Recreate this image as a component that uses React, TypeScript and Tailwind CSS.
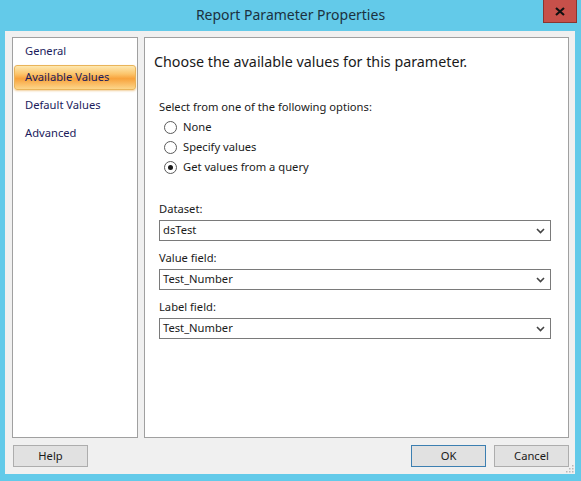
import React from "react";

const font = { fontFamily: '"Noto Sans", "Open Sans", sans-serif' };

function Radio({ checked, label }: { checked?: boolean; label: string }) {
  return (
    <div className="flex items-center h-[20px]">
      <span className="ml-[5px] w-[13px] h-[13px] rounded-full border border-[#5a5a5a] bg-white flex items-center justify-center">
        {checked && <span className="w-[5px] h-[5px] rounded-full bg-[#1a1a1a]" />}
      </span>
      <span className="ml-[6px] text-[11.2px] text-[#1a1a1a]">{label}</span>
    </div>
  );
}

function Select({ label, value }: { label: string; value: string }) {
  return (
    <div className="flex flex-col">
      <div className="text-[11.2px] text-[#1a1a1a] h-[19px] leading-[19px]">{label}</div>
      <div className="mt-[2px] w-[392px] h-[21px] border border-[#7a7a7a] bg-white flex items-center justify-between pl-[3px] pr-[5px]">
        <span className="text-[11.2px] text-[#1a1a1a]">{value}</span>
        <svg width="9" height="6" viewBox="0 0 9 6">
          <path d="M1 1 L4.5 4.5 L8 1" fill="none" stroke="#444" strokeWidth="1.6" />
        </svg>
      </div>
    </div>
  );
}

function Grip() {
  const dots = [
    [6, 0],
    [3, 3],
    [6, 3],
    [0, 6],
    [3, 6],
    [6, 6],
  ];
  return (
    <svg width="8" height="8" viewBox="0 0 8 8" className="absolute right-[1px] bottom-[1px]">
      {dots.map(([x, y], i) => (
        <rect key={i} x={x} y={y} width="1.5" height="1.5" fill="#b8b8b8" />
      ))}
    </svg>
  );
}

export default function App() {
  return (
    <div className="w-[581px] h-[481px] bg-[#63cae9] flex flex-col" style={font}>
      <div className="relative h-[31px] flex items-center justify-center">
        <span className="text-[14px] text-[#1b3140] mt-[-2px]">Report Parameter Properties</span>
        <div className="absolute right-[4px] top-0 w-[34px] h-[23px] bg-[#c7504a] border border-[#8a3530] border-t-0 flex items-center justify-center">
          <svg width="10" height="9" viewBox="0 0 10 9">
            <path d="M1 1 L9 8 M9 1 L1 8" stroke="#111" strokeWidth="2.2" />
          </svg>
        </div>
      </div>
      <div className="relative ml-[5px] w-[570px] h-[443px] bg-[#f0f0f0] pt-[6px] pl-[7px] pr-[6px] pb-[7px] flex flex-col">
        <div className="flex gap-[6px] h-[401px]">
          <div className="w-[126px] h-full bg-white border border-[#a0a0a0] px-[1px] flex flex-col">
            <div className="h-[27px] pl-[11px] flex items-center text-[11.2px] text-[#1b1b5c]">General</div>
            <div className="h-[25px] rounded-[3px] border border-[#e9b45a] bg-[linear-gradient(to_bottom,#fde8b0_0%,#fcc46a_35%,#f8a23c_55%,#fcd68a_100%)] pl-[10px] flex items-center text-[11.2px] text-[#1b1b5c] shadow-[0_1px_2px_rgba(230,160,60,0.5)]">Available Values</div>
            <div className="h-[30px] pl-[11px] flex items-center text-[11.2px] text-[#1b1b5c]">Default Values</div>
            <div className="h-[26px] pl-[11px] flex items-center text-[11.2px] text-[#1b1b5c]">Advanced</div>
          </div>
          <div className="w-[425px] h-full bg-white border border-[#a0a0a0] pl-[9px] pt-[13px] flex flex-col">
            <div className="text-[14.3px] text-[#1a1a1a] h-[22px] leading-[22px]">Choose the available values for this parameter.</div>
            <div className="pl-[5px] mt-[24px] flex flex-col">
              <div className="text-[11.2px] text-[#1a1a1a] h-[19px] leading-[19px] mb-[1px]">Select from one of the following options:</div>
              <Radio label="None" />
              <Radio label="Specify values" />
              <Radio checked label="Get values from a query" />
              <div className="mt-[22px] flex flex-col gap-[7px]">
                <Select label="Dataset:" value="dsTest" />
                <Select label="Value field:" value="Test_Number" />
                <Select label="Label field:" value="Test_Number" />
              </div>
            </div>
          </div>
        </div>
        <div className="mt-[7px] h-[22px] flex items-center justify-between pl-[1px]">
          <div className="w-[75px] h-[22px] bg-[#e1e1e1] border border-[#adadad] flex items-center justify-center text-[11.2px] text-[#1a1a1a]">Help</div>
          <div className="flex gap-[8px]">
            <div className="w-[75px] h-[22px] bg-[#e1e1e1] border border-[#3c7fb1] flex items-center justify-center text-[11.2px] text-[#1a1a1a]">OK</div>
            <div className="w-[75px] h-[22px] bg-[#e1e1e1] border border-[#adadad] flex items-center justify-center text-[11.2px] text-[#1a1a1a]">Cancel</div>
          </div>
        </div>
        <Grip />
      </div>
    </div>
  );
}
